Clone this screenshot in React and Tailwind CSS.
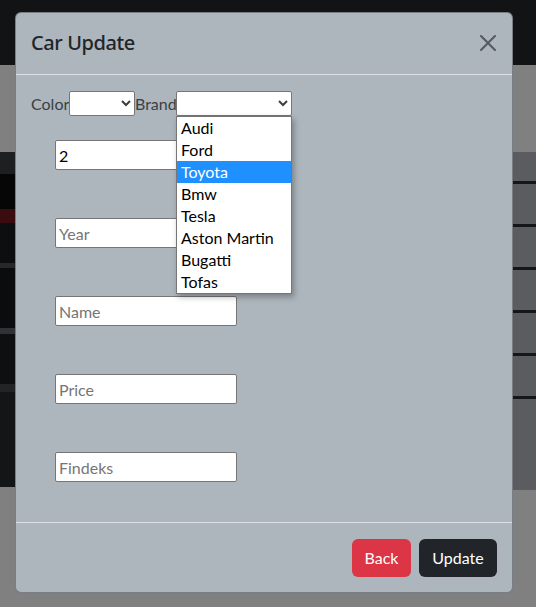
import React from 'react';

const brands = ['Audi', 'Ford', 'Toyota', 'Bmw', 'Tesla', 'Aston Martin', 'Bugatti', 'Tofas'];
const fields = [
  { placeholder: 'Model', value: '2' },
  { placeholder: 'Year', value: '' },
  { placeholder: 'Name', value: '' },
  { placeholder: 'Price', value: '' },
  { placeholder: 'Findeks', value: '' },
];

const CloseIcon = () => (
  <svg width="16" height="16" viewBox="0 0 16 16" className="opacity-50">
    <path
      fill="#000"
      d="M.293.293a1 1 0 0 1 1.414 0L8 6.586 14.293.293a1 1 0 1 1 1.414 1.414L9.414 8l6.293 6.293a1 1 0 0 1-1.414 1.414L8 9.414l-6.293 6.293a1 1 0 0 1-1.414-1.414L6.586 8 .293 1.707a1 1 0 0 1 0-1.414z"
    />
  </svg>
);

const App = () => {
  return (
    <div className="relative w-full h-[607px] overflow-hidden bg-[#808080] font-['Lato','Liberation_Sans',sans-serif] text-[16px]">
      {/* page behind the backdrop */}
      <div className="h-[65px] bg-[#121315]" />
      <div className="pt-[87px] flex justify-between">
        <div className="w-[15px] h-[335px] bg-[#08090a] flex flex-col">
          <div className="h-[22px] bg-[#1e1f21]" />
          <div className="h-[35px] bg-[#060607]" />
          <div className="h-[14px] bg-[#3a0c10]" />
          <div className="h-[40px] bg-[#0d0e10]" />
          <div className="h-[5px] bg-[#26282a]" />
          <div className="h-[60px] bg-[#0b0c0d]" />
          <div className="h-[6px] bg-[#303235]" />
          <div className="h-[50px] bg-[#0e0f11]" />
          <div className="h-[8px] bg-[#222426]" />
          <div className="flex-1 bg-[#141517]" />
        </div>
        <div className="w-[23px] h-[338px] bg-[#5a5c60] flex flex-col">
          <div className="h-[29px]" />
          {[0, 1, 2, 3, 4].map((i) => (
            <React.Fragment key={i}>
              <div className="h-[3px] bg-[#151618]" />
              <div className="h-[40px]" />
            </React.Fragment>
          ))}
          <div className="h-[3px] bg-[#151618]" />
        </div>
      </div>

      {/* modal */}
      <div className="absolute inset-0 pt-[12px] pl-[15px]">
        <div className="w-[498px] h-[581px] flex flex-col bg-[#adb5bd] rounded-[6px] border border-black/30 text-[#212529]">
          <div className="flex items-center justify-between pl-[15px] pr-4 pt-[15px] pb-4 border-b border-[#dee2e6]">
            <h5 className="font-['Noto_Sans',sans-serif] text-[20px] leading-[30px] font-medium tracking-[-0.4px]">Car Update</h5>
            <button className="w-4 h-4">
              <CloseIcon />
            </button>
          </div>

          <div className="flex-1 pl-[15px] pr-4 py-4">
            <div className="flex items-center text-[#3a3f44]">
              <span className="w-[38px]">Color</span>
              <select className="w-[66px] h-[25px] bg-white border border-[#767676] rounded-[2px]" />
              <span className="w-[41px]">Brand</span>
              <div className="relative">
                <select className="w-[116px] h-[25px] bg-white border border-[#767676] rounded-[2px]" />
                <div className="absolute left-0 top-[25px] w-[116px] bg-white border border-[#767676] shadow-[2px_3px_6px_rgba(0,0,0,0.3)] z-10 text-black">
                  {brands.map((b) => (
                    <div
                      key={b}
                      className={`h-[22px] px-[4px] leading-[22px] ${b === 'Toyota' ? 'bg-[#1e90ff] text-white' : ''}`}
                    >
                      {b}
                    </div>
                  ))}
                </div>
              </div>
            </div>

            <div className="ml-6 mt-6 flex flex-col gap-[48px]">
              {fields.map((f) => (
                <input
                  key={f.placeholder}
                  defaultValue={f.value}
                  placeholder={f.placeholder}
                  className="w-[182px] h-[30px] px-[3px] bg-white border border-[#767676] rounded-[2px] text-black placeholder:text-[#757575]"
                />
              ))}
            </div>
          </div>

          <div className="flex justify-end gap-2 pl-4 pr-[15px] pt-4 pb-[15px] border-t border-[#dee2e6]">
            <button className="w-[59px] h-[38px] rounded-[6px] bg-[#dc3545] text-white">Back</button>
            <button className="w-[78px] h-[38px] rounded-[6px] bg-[#212529] text-white">Update</button>
          </div>
        </div>
      </div>
    </div>
  );
};

export default App;
